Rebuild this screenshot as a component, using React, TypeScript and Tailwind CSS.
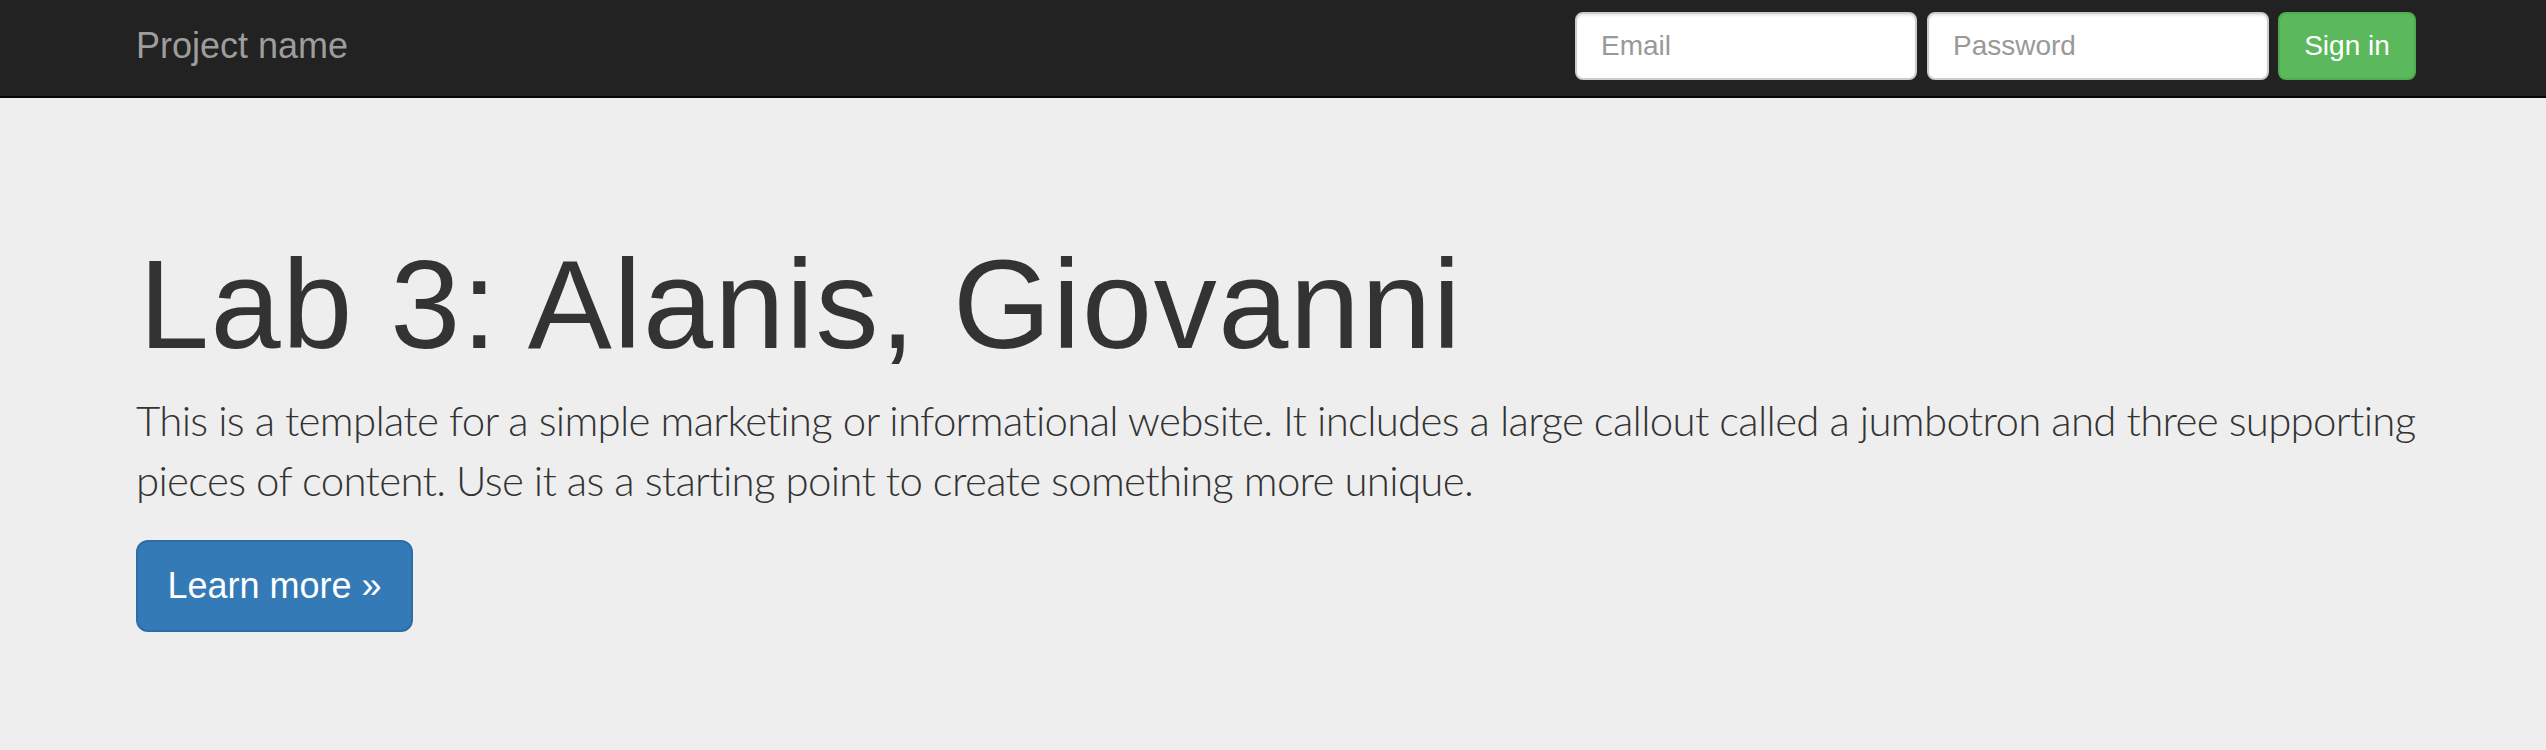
import React from "react";

export default function App() {
  return (
    <div className="min-h-[750px] w-full bg-[#eeeeee] font-['Liberation_Sans',Arial,sans-serif] text-[#333333]">
      <nav className="h-[98px] w-full border-b-2 border-[#080808] bg-[#222222]">
        <div className="mx-auto flex w-[2340px] items-start justify-between pl-[33px] pr-[30px]">
          <a className="pt-[26px] text-[36px] leading-[40px] text-[#9d9d9d]">Project name</a>
          <form className="mr-[-3px] mt-[12px] flex items-start">
            <input
              type="text"
              placeholder="Email"
              className="h-[68px] w-[342px] rounded-[8px] border-2 border-[#cccccc] bg-white px-[24px] text-[28px] text-[#555555] shadow-[inset_0_2px_2px_rgba(0,0,0,0.075)] outline-none placeholder:text-[#999999]"
            />
            <input
              type="password"
              placeholder="Password"
              className="ml-[10px] h-[68px] w-[342px] rounded-[8px] border-2 border-[#cccccc] bg-white px-[24px] text-[28px] text-[#555555] shadow-[inset_0_2px_2px_rgba(0,0,0,0.075)] outline-none placeholder:text-[#999999]"
            />
            <button
              type="button"
              className="ml-[9px] h-[68px] w-[138px] rounded-[8px] border-2 border-[#4cae4c] bg-[#5cb85c] text-[28px] text-white"
            >
              Sign in
            </button>
          </form>
        </div>
      </nav>
      <div className="mx-auto w-[2340px] pl-[33px] pr-[30px] pt-[137px]">
        <h1 className="mb-[16px] ml-[3px] text-[126px] font-normal leading-[139px] tracking-[1.5px]">
          Lab 3: Alanis, Giovanni
        </h1>
        <p className="mb-[30px] whitespace-nowrap font-['Lato',sans-serif] text-[42px] font-light leading-[60px] tracking-[-0.7px]">
          This is a template for a simple marketing or informational website. It includes a large callout called a jumbotron and three supporting
          <br />
          pieces of content. Use it as a starting point to create something more unique.
        </p>
        <p>
          <a className="flex h-[92px] w-[277px] items-center justify-center rounded-[12px] border-2 border-[#2e6da4] bg-[#337ab7] text-[36px] text-white">
            Learn more »
          </a>
        </p>
      </div>
    </div>
  );
}
